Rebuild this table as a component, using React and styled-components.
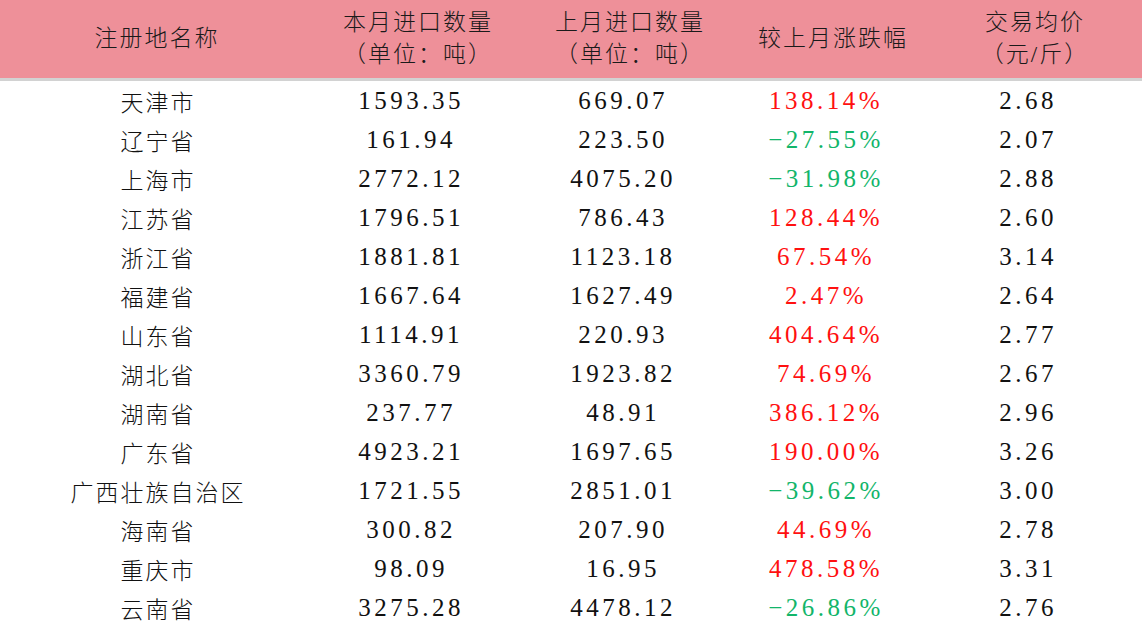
import React from 'react'
import styled, { createGlobalStyle } from 'styled-components'

const GlobalStyle = createGlobalStyle`
  html, body {
    margin: 0;
    padding: 0;
    background: #FFFFFF;
  }
  body {
    width: 1142px;
    height: 631px;
    overflow: hidden;
  }
`

const COLS = '314px 208px 216px 190px 214px'

const Table = styled.div`
  width: 1142px;
  display: flex;
  flex-direction: column;
  color: #111111;
`

const HeaderRow = styled.div`
  display: grid;
  grid-template-columns: ${COLS};
  height: 78px;
  background: #EE9099;
  border-bottom: 3px solid #D2D2D2;
`

const HeadCell = styled.div`
  display: flex;
  flex-direction: column;
  align-items: center;
  justify-content: center;
  font-family: "Liberation Serif", "Noto Sans CJK SC", serif;
  font-weight: 300;
  font-size: 23px;
  line-height: 32px;
  letter-spacing: 2px;
  color: #1A1A1A;
`

const Row = styled.div`
  display: grid;
  grid-template-columns: ${COLS};
  height: 39px;
  align-items: center;
`

const NameCell = styled.div`
  text-align: center;
  font-family: "Liberation Serif", "Noto Sans CJK SC", serif;
  font-weight: 300;
  font-size: 23px;
  letter-spacing: 2px;
  padding-left: 2px;
`

const NumCell = styled.div`
  text-align: center;
  font-family: "Liberation Serif", "Noto Sans CJK SC", serif;
  font-size: 25px;
  letter-spacing: 3.5px;
  padding-right: 14px;
  color: ${(p) => (p.$tone === 'up' ? '#FF1010' : p.$tone === 'down' ? '#12B56A' : '#111111')};
`

const rows = [
  ['天津市', '1593.35', '669.07', '138.14%', '2.68'],
  ['辽宁省', '161.94', '223.50', '−27.55%', '2.07'],
  ['上海市', '2772.12', '4075.20', '−31.98%', '2.88'],
  ['江苏省', '1796.51', '786.43', '128.44%', '2.60'],
  ['浙江省', '1881.81', '1123.18', '67.54%', '3.14'],
  ['福建省', '1667.64', '1627.49', '2.47%', '2.64'],
  ['山东省', '1114.91', '220.93', '404.64%', '2.77'],
  ['湖北省', '3360.79', '1923.82', '74.69%', '2.67'],
  ['湖南省', '237.77', '48.91', '386.12%', '2.96'],
  ['广东省', '4923.21', '1697.65', '190.00%', '3.26'],
  ['广西壮族自治区', '1721.55', '2851.01', '−39.62%', '3.00'],
  ['海南省', '300.82', '207.90', '44.69%', '2.78'],
  ['重庆市', '98.09', '16.95', '478.58%', '3.31'],
  ['云南省', '3275.28', '4478.12', '−26.86%', '2.76'],
]

export default function App() {
  return (
    <>
      <GlobalStyle />
      <Table>
        <HeaderRow>
          <HeadCell>注册地名称</HeadCell>
          <HeadCell>
            <span>本月进口数量</span>
            <span>（单位：吨）</span>
          </HeadCell>
          <HeadCell>
            <span>上月进口数量</span>
            <span>（单位：吨）</span>
          </HeadCell>
          <HeadCell>较上月涨跌幅</HeadCell>
          <HeadCell>
            <span>交易均价</span>
            <span>（元/斤）</span>
          </HeadCell>
        </HeaderRow>
        {rows.map(([name, cur, prev, change, price]) => (
          <Row key={name}>
            <NameCell>{name}</NameCell>
            <NumCell>{cur}</NumCell>
            <NumCell>{prev}</NumCell>
            <NumCell $tone={change.startsWith('−') ? 'down' : 'up'}>{change}</NumCell>
            <NumCell>{price}</NumCell>
          </Row>
        ))}
      </Table>
    </>
  )
}
